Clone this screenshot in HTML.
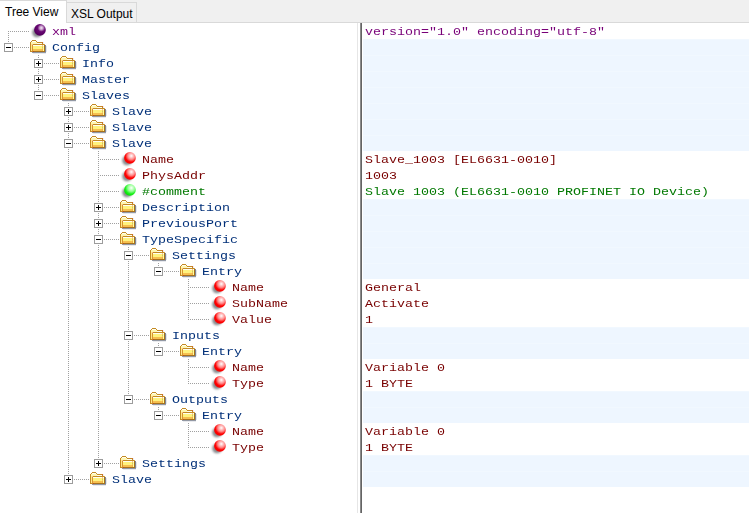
<!DOCTYPE html>
<html><head><meta charset="utf-8"><style>
html,body{margin:0;padding:0}
body{width:749px;height:513px;overflow:hidden;background:#fff;position:relative;font-family:"Liberation Sans",sans-serif}
div{position:absolute}
.t{font-family:"Liberation Mono",monospace;font-size:13.333px;line-height:16px;height:16px;white-space:pre;transform:scaleY(0.88);transform-origin:0 11.5px}
.bl{left:363px;width:386px;height:15px;background:#eef6ff;border-top:1px solid #f1f8ff}
.tabtxt{font-size:12px;line-height:14px;color:#000;white-space:pre}
svg{position:absolute;left:0;top:0}
</style></head><body>
<div style="left:0;top:0;width:749px;height:22px;background:#f0f0f0"></div>
<div style="left:66px;top:22px;width:683px;height:1px;background:#d9d9d9"></div>
<div style="left:0;top:0;width:66px;height:1px;background:#d9d9d9"></div>
<div style="left:0;top:1px;width:66px;height:22px;background:#fff"></div>
<div style="left:66px;top:0;width:1px;height:23px;background:#d9d9d9"></div>
<div style="left:67px;top:2px;width:69px;height:1px;background:#d9d9d9"></div>
<div style="left:136px;top:2px;width:1px;height:21px;background:#d9d9d9"></div>
<div class="tabtxt" style="left:5px;top:5px">Tree View</div>
<div class="tabtxt" style="left:71px;top:7px">XSL Output</div>
<div class="t" style="top:24px;left:52px;color:#780078">xml</div><div class="t" style="top:24px;left:365px;color:#780078">version=&quot;1.0&quot; encoding=&quot;utf-8&quot;</div><div class="t" style="top:40px;left:52px;color:#002f78">Config</div><div class="bl" style="top:39px"></div><div class="t" style="top:56px;left:82px;color:#002f78">Info</div><div class="bl" style="top:55px"></div><div class="t" style="top:72px;left:82px;color:#002f78">Master</div><div class="bl" style="top:71px"></div><div class="t" style="top:88px;left:82px;color:#002f78">Slaves</div><div class="bl" style="top:87px"></div><div class="t" style="top:104px;left:112px;color:#002f78">Slave</div><div class="bl" style="top:103px"></div><div class="t" style="top:120px;left:112px;color:#002f78">Slave</div><div class="bl" style="top:119px"></div><div class="t" style="top:136px;left:112px;color:#002f78">Slave</div><div class="bl" style="top:135px"></div><div class="t" style="top:152px;left:142px;color:#780000">Name</div><div class="t" style="top:152px;left:365px;color:#780000">Slave_1003 [EL6631-0010]</div><div class="t" style="top:168px;left:142px;color:#780000">PhysAddr</div><div class="t" style="top:168px;left:365px;color:#780000">1003</div><div class="t" style="top:184px;left:142px;color:#007800">#comment</div><div class="t" style="top:184px;left:365px;color:#007800">Slave 1003 (EL6631-0010 PROFINET IO Device)</div><div class="t" style="top:200px;left:142px;color:#002f78">Description</div><div class="bl" style="top:199px"></div><div class="t" style="top:216px;left:142px;color:#002f78">PreviousPort</div><div class="bl" style="top:215px"></div><div class="t" style="top:232px;left:142px;color:#002f78">TypeSpecific</div><div class="bl" style="top:231px"></div><div class="t" style="top:248px;left:172px;color:#002f78">Settings</div><div class="bl" style="top:247px"></div><div class="t" style="top:264px;left:202px;color:#002f78">Entry</div><div class="bl" style="top:263px"></div><div class="t" style="top:280px;left:232px;color:#780000">Name</div><div class="t" style="top:280px;left:365px;color:#780000">General</div><div class="t" style="top:296px;left:232px;color:#780000">SubName</div><div class="t" style="top:296px;left:365px;color:#780000">Activate</div><div class="t" style="top:312px;left:232px;color:#780000">Value</div><div class="t" style="top:312px;left:365px;color:#780000">1</div><div class="t" style="top:328px;left:172px;color:#002f78">Inputs</div><div class="bl" style="top:327px"></div><div class="t" style="top:344px;left:202px;color:#002f78">Entry</div><div class="bl" style="top:343px"></div><div class="t" style="top:360px;left:232px;color:#780000">Name</div><div class="t" style="top:360px;left:365px;color:#780000">Variable 0</div><div class="t" style="top:376px;left:232px;color:#780000">Type</div><div class="t" style="top:376px;left:365px;color:#780000">1 BYTE</div><div class="t" style="top:392px;left:172px;color:#002f78">Outputs</div><div class="bl" style="top:391px"></div><div class="t" style="top:408px;left:202px;color:#002f78">Entry</div><div class="bl" style="top:407px"></div><div class="t" style="top:424px;left:232px;color:#780000">Name</div><div class="t" style="top:424px;left:365px;color:#780000">Variable 0</div><div class="t" style="top:440px;left:232px;color:#780000">Type</div><div class="t" style="top:440px;left:365px;color:#780000">1 BYTE</div><div class="t" style="top:456px;left:142px;color:#002f78">Settings</div><div class="bl" style="top:455px"></div><div class="t" style="top:472px;left:112px;color:#002f78">Slave</div><div class="bl" style="top:471px"></div>
<div style="left:357px;top:23px;width:1px;height:490px;background:#e6e6e6"></div>
<div style="left:360px;top:23px;width:1px;height:490px;background:#8a8a8a"></div>
<div style="left:361px;top:23px;width:1px;height:490px;background:#646464"></div>
<svg width="357" height="513" viewBox="0 0 357 513">
<defs>
<pattern id="dots" patternUnits="userSpaceOnUse" width="2" height="2"><rect x="1" y="0" width="1" height="1" fill="#a0a0a0"/><rect x="0" y="1" width="1" height="1" fill="#a0a0a0"/></pattern>
<g id="bp"><rect x="0" y="0" width="9" height="9" fill="#9c9c9c"/><rect x="1" y="1" width="7" height="7" fill="#fff"/><rect x="2" y="4" width="5" height="1" fill="#000"/><rect x="4" y="2" width="1" height="5" fill="#000"/></g>
<g id="bm"><rect x="0" y="0" width="9" height="9" fill="#9c9c9c"/><rect x="1" y="1" width="7" height="7" fill="#fff"/><rect x="2" y="4" width="5" height="1" fill="#000"/></g>
<filter id="blur" x="-50%" y="-50%" width="200%" height="200%"><feGaussianBlur stdDeviation="1.3"/></filter>
<radialGradient id="gp" cx="0.62" cy="0.33" r="0.72"><stop offset="0" stop-color="#f4e8f4"/><stop offset="0.2" stop-color="#c8a0cc"/><stop offset="0.45" stop-color="#6a0a74"/><stop offset="0.75" stop-color="#5a0064"/><stop offset="1" stop-color="#4a0054"/></radialGradient>
<radialGradient id="gr" cx="0.62" cy="0.33" r="0.72"><stop offset="0" stop-color="#ffffff"/><stop offset="0.42" stop-color="#ff8a8a"/><stop offset="0.72" stop-color="#ff0000"/><stop offset="1" stop-color="#f00000"/></radialGradient>
<radialGradient id="gg" cx="0.62" cy="0.33" r="0.72"><stop offset="0" stop-color="#ffffff"/><stop offset="0.42" stop-color="#90ff90"/><stop offset="0.72" stop-color="#18f018"/><stop offset="1" stop-color="#00d800"/></radialGradient>
<g id="shadow"><circle cx="7" cy="9.5" r="4.8" fill="#606468" filter="url(#blur)" opacity="0.75"/></g>
<g id="sp"><use href="#shadow"/><circle cx="9.95" cy="6.9" r="5.85" fill="url(#gp)"/></g>
<g id="sr"><use href="#shadow"/><circle cx="9.95" cy="6.9" r="5.85" fill="url(#gr)"/></g>
<g id="sg"><use href="#shadow"/><circle cx="9.95" cy="6.9" r="5.85" fill="url(#gg)"/></g>
<g id="fold" shape-rendering="crispEdges">
 <rect x="15" y="6" width="1" height="7" fill="#4a5468" opacity="0.7"/>
 <rect x="2" y="13" width="14" height="1" fill="#4a5468" opacity="0.6"/>
 <rect x="16" y="7" width="1" height="6" fill="#4a5468" opacity="0.15"/>
 <rect x="3" y="14" width="13" height="1" fill="#4a5468" opacity="0.12"/>
 <rect x="13" y="3" width="1" height="2" fill="#8090b0" opacity="0.15"/>
 <rect x="2" y="1" width="4" height="1" fill="#c48a24"/>
 <rect x="1" y="2" width="1" height="1" fill="#c48a24"/>
 <rect x="2" y="2" width="4" height="1" fill="#fffef0"/>
 <rect x="6" y="2" width="1" height="1" fill="#c48a24"/>
 <rect x="0" y="3" width="1" height="10" fill="#c48a24"/>
 <rect x="1" y="3" width="6" height="1" fill="#fff6b0"/>
 <rect x="7" y="3" width="5" height="1" fill="#c48a24"/>
 <rect x="12" y="3" width="1" height="1" fill="#d06a30"/>
 <rect x="1" y="4" width="6" height="1" fill="#fff6b0"/>
 <rect x="7" y="4" width="5" height="1" fill="#fffef0"/>
 <rect x="12" y="4" width="1" height="1" fill="#c48a24"/>
 <rect x="1" y="5" width="1" height="7" fill="#ffe98a"/>
 <rect x="2" y="5" width="1" height="1" fill="#f4b888"/>
 <rect x="3" y="5" width="11" height="1" fill="#c48a24"/>
 <rect x="14" y="5" width="1" height="1" fill="#d8a040"/>
 <rect x="2" y="6" width="1" height="6" fill="#d89430"/>
 <rect x="3" y="6" width="9" height="1" fill="#fffef0"/>
 <rect x="12" y="6" width="1" height="1" fill="#f8c890"/>
 <rect x="13" y="6" width="1" height="1" fill="#fffff0"/>
 <rect x="14" y="6" width="1" height="7" fill="#a8721c"/>
 <rect x="3" y="7" width="9" height="3" fill="#fff37e"/>
 <rect x="12" y="7" width="1" height="3" fill="#f4c070"/>
 <rect x="13" y="7" width="1" height="5" fill="#ffff9c"/>
 <rect x="3" y="10" width="9" height="2" fill="#f6bf50"/>
 <rect x="12" y="10" width="1" height="2" fill="#eeb048"/>
 <rect x="12" y="8" width="1" height="1" fill="#c8d060"/>
 <rect x="0" y="12" width="2" height="1" fill="#c48a24"/>
 <rect x="2" y="12" width="1" height="1" fill="#c48a24"/>
 <rect x="3" y="12" width="1" height="1" fill="#c04a20"/>
 <rect x="4" y="12" width="10" height="1" fill="#a8721c"/>
</g>
</defs>
<g fill="url(#dots)" shape-rendering="crispEdges"><rect x="8" y="31" width="21" height="1"/><rect x="8" y="31" width="1" height="8"/><rect x="8" y="47" width="21" height="1"/><rect x="8" y="39" width="1" height="9"/><rect x="38" y="63" width="21" height="1"/><rect x="38" y="55" width="1" height="16"/><rect x="38" y="79" width="21" height="1"/><rect x="38" y="71" width="1" height="16"/><rect x="38" y="95" width="21" height="1"/><rect x="38" y="87" width="1" height="9"/><rect x="68" y="111" width="21" height="1"/><rect x="68" y="103" width="1" height="16"/><rect x="68" y="127" width="21" height="1"/><rect x="68" y="119" width="1" height="16"/><rect x="68" y="143" width="21" height="1"/><rect x="68" y="135" width="1" height="16"/><rect x="98" y="159" width="21" height="1"/><rect x="98" y="151" width="1" height="16"/><rect x="68" y="151" width="1" height="16"/><rect x="98" y="175" width="21" height="1"/><rect x="98" y="167" width="1" height="16"/><rect x="68" y="167" width="1" height="16"/><rect x="98" y="191" width="21" height="1"/><rect x="98" y="183" width="1" height="16"/><rect x="68" y="183" width="1" height="16"/><rect x="98" y="207" width="21" height="1"/><rect x="98" y="199" width="1" height="16"/><rect x="68" y="199" width="1" height="16"/><rect x="98" y="223" width="21" height="1"/><rect x="98" y="215" width="1" height="16"/><rect x="68" y="215" width="1" height="16"/><rect x="98" y="239" width="21" height="1"/><rect x="98" y="231" width="1" height="16"/><rect x="68" y="231" width="1" height="16"/><rect x="128" y="255" width="21" height="1"/><rect x="128" y="247" width="1" height="16"/><rect x="98" y="247" width="1" height="16"/><rect x="68" y="247" width="1" height="16"/><rect x="158" y="271" width="21" height="1"/><rect x="158" y="263" width="1" height="9"/><rect x="128" y="263" width="1" height="16"/><rect x="98" y="263" width="1" height="16"/><rect x="68" y="263" width="1" height="16"/><rect x="188" y="287" width="21" height="1"/><rect x="188" y="279" width="1" height="16"/><rect x="128" y="279" width="1" height="16"/><rect x="98" y="279" width="1" height="16"/><rect x="68" y="279" width="1" height="16"/><rect x="188" y="303" width="21" height="1"/><rect x="188" y="295" width="1" height="16"/><rect x="128" y="295" width="1" height="16"/><rect x="98" y="295" width="1" height="16"/><rect x="68" y="295" width="1" height="16"/><rect x="188" y="319" width="21" height="1"/><rect x="188" y="311" width="1" height="9"/><rect x="128" y="311" width="1" height="16"/><rect x="98" y="311" width="1" height="16"/><rect x="68" y="311" width="1" height="16"/><rect x="128" y="335" width="21" height="1"/><rect x="128" y="327" width="1" height="16"/><rect x="98" y="327" width="1" height="16"/><rect x="68" y="327" width="1" height="16"/><rect x="158" y="351" width="21" height="1"/><rect x="158" y="343" width="1" height="9"/><rect x="128" y="343" width="1" height="16"/><rect x="98" y="343" width="1" height="16"/><rect x="68" y="343" width="1" height="16"/><rect x="188" y="367" width="21" height="1"/><rect x="188" y="359" width="1" height="16"/><rect x="128" y="359" width="1" height="16"/><rect x="98" y="359" width="1" height="16"/><rect x="68" y="359" width="1" height="16"/><rect x="188" y="383" width="21" height="1"/><rect x="188" y="375" width="1" height="9"/><rect x="128" y="375" width="1" height="16"/><rect x="98" y="375" width="1" height="16"/><rect x="68" y="375" width="1" height="16"/><rect x="128" y="399" width="21" height="1"/><rect x="128" y="391" width="1" height="9"/><rect x="98" y="391" width="1" height="16"/><rect x="68" y="391" width="1" height="16"/><rect x="158" y="415" width="21" height="1"/><rect x="158" y="407" width="1" height="9"/><rect x="98" y="407" width="1" height="16"/><rect x="68" y="407" width="1" height="16"/><rect x="188" y="431" width="21" height="1"/><rect x="188" y="423" width="1" height="16"/><rect x="98" y="423" width="1" height="16"/><rect x="68" y="423" width="1" height="16"/><rect x="188" y="447" width="21" height="1"/><rect x="188" y="439" width="1" height="9"/><rect x="98" y="439" width="1" height="16"/><rect x="68" y="439" width="1" height="16"/><rect x="98" y="463" width="21" height="1"/><rect x="98" y="455" width="1" height="9"/><rect x="68" y="455" width="1" height="16"/><rect x="68" y="479" width="21" height="1"/><rect x="68" y="471" width="1" height="9"/></g>
<use href="#sp" x="30" y="23"/><use href="#bm" x="4" y="43"/><use href="#fold" x="30" y="39"/><use href="#bp" x="34" y="59"/><use href="#fold" x="60" y="55"/><use href="#bp" x="34" y="75"/><use href="#fold" x="60" y="71"/><use href="#bm" x="34" y="91"/><use href="#fold" x="60" y="87"/><use href="#bp" x="64" y="107"/><use href="#fold" x="90" y="103"/><use href="#bp" x="64" y="123"/><use href="#fold" x="90" y="119"/><use href="#bm" x="64" y="139"/><use href="#fold" x="90" y="135"/><use href="#sr" x="120" y="151"/><use href="#sr" x="120" y="167"/><use href="#sg" x="120" y="183"/><use href="#bp" x="94" y="203"/><use href="#fold" x="120" y="199"/><use href="#bp" x="94" y="219"/><use href="#fold" x="120" y="215"/><use href="#bm" x="94" y="235"/><use href="#fold" x="120" y="231"/><use href="#bm" x="124" y="251"/><use href="#fold" x="150" y="247"/><use href="#bm" x="154" y="267"/><use href="#fold" x="180" y="263"/><use href="#sr" x="210" y="279"/><use href="#sr" x="210" y="295"/><use href="#sr" x="210" y="311"/><use href="#bm" x="124" y="331"/><use href="#fold" x="150" y="327"/><use href="#bm" x="154" y="347"/><use href="#fold" x="180" y="343"/><use href="#sr" x="210" y="359"/><use href="#sr" x="210" y="375"/><use href="#bm" x="124" y="395"/><use href="#fold" x="150" y="391"/><use href="#bm" x="154" y="411"/><use href="#fold" x="180" y="407"/><use href="#sr" x="210" y="423"/><use href="#sr" x="210" y="439"/><use href="#bp" x="94" y="459"/><use href="#fold" x="120" y="455"/><use href="#bp" x="64" y="475"/><use href="#fold" x="90" y="471"/>
</svg>
</body></html>
